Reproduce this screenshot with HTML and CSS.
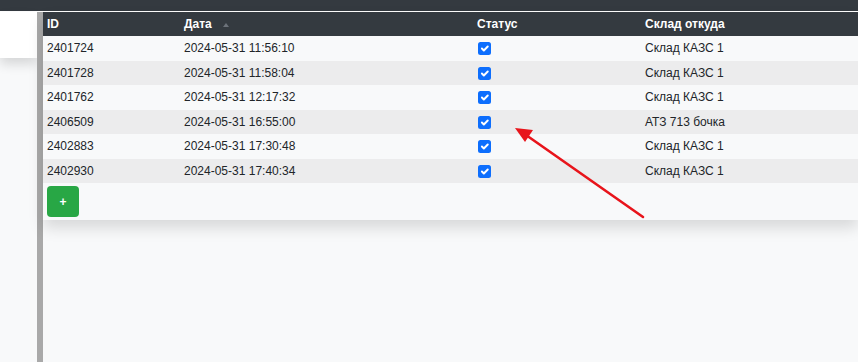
FILE: index.html
```html
<!DOCTYPE html>
<html lang="ru">
<head>
<meta charset="utf-8">
<link rel="stylesheet" href="styles.css">
</head>
<body>
<div class="topbar"></div>
<div class="main">
  <div class="left"><div class="leftcard"></div></div>
  <div class="divider"></div>
  <div class="content">
    <div class="card">
      <table class="tbl">
        <colgroup><col class="c1"><col class="c2"><col class="c3"><col></colgroup>
        <thead>
          <tr><th>ID</th><th>Дата <span class="sort"></span></th><th>Статус</th><th>Склад откуда</th></tr>
        </thead>
        <tbody>
          <tr><td>2401724</td><td>2024-05-31 11:56:10</td><td><span class="chk"></span></td><td>Склад КАЗС 1</td></tr>
          <tr><td>2401728</td><td>2024-05-31 11:58:04</td><td><span class="chk"></span></td><td>Склад КАЗС 1</td></tr>
          <tr><td>2401762</td><td>2024-05-31 12:17:32</td><td><span class="chk"></span></td><td>Склад КАЗС 1</td></tr>
          <tr><td>2406509</td><td>2024-05-31 16:55:00</td><td><span class="chk"></span></td><td>АТЗ 713 бочка</td></tr>
          <tr><td>2402883</td><td>2024-05-31 17:30:48</td><td><span class="chk"></span></td><td>Склад КАЗС 1</td></tr>
          <tr><td>2402930</td><td>2024-05-31 17:40:34</td><td><span class="chk"></span></td><td>Склад КАЗС 1</td></tr>
        </tbody>
      </table>
      <div class="actions"><button class="add">+</button></div>
    </div>
  </div>
</div>
<svg class="arrow" width="858" height="362" viewBox="0 0 858 362">
  <line x1="643" y1="217" x2="526" y2="135" stroke="#e8141b" stroke-width="2.6" stroke-linecap="round"/>
  <polygon points="515,128 533,130 525,142" fill="#e8141b"/>
</svg>
</body>
</html>
```
FILE: styles.css
```css
html, body { margin: 0; padding: 0; }
body {
  background: #f8f9fa;
  font-family: "Liberation Sans", Arial, sans-serif;
  font-size: 12px;
  color: #212529;
  width: 858px;
  height: 362px;
  overflow: hidden;
  position: relative;
}
.topbar {
  height: 11px;
  background: #343a40;
  border-bottom: 1px solid #ffffff;
}
.main {
  display: flex;
  height: 350px;
}
.left { width: 37px; }
.leftcard {
  height: 46px;
  background: #ffffff;
  box-shadow: 0 6px 12px rgba(0,0,0,0.14);
}
.divider { width: 6px; background: #a9a9a9; }
.content { flex: 1; }
.card {
  background: #f8f9fa;
  box-shadow: 0 8px 14px rgba(0,0,0,0.13);
}
.tbl {
  width: 100%;
  border-collapse: collapse;
  table-layout: fixed;
}
.c1 { width: 137px; }
.c2 { width: 293px; }
.c3 { width: 168px; }
.tbl th {
  background: #343a40;
  color: #ffffff;
  font-weight: bold;
  text-align: left;
  height: 24px;
  padding: 0 4px;
  box-sizing: border-box;
}
.tbl td {
  height: 24.5px;
  padding: 0 4px;
  box-sizing: border-box;
  vertical-align: middle;
}
.tbl tbody tr:nth-child(even) td { background: #ececed; }
.sort {
  display: inline-block;
  width: 0; height: 0;
  border-left: 3.5px solid transparent;
  border-right: 3.5px solid transparent;
  border-bottom: 4px solid #6c727a;
  margin-left: 8px;
  vertical-align: 1px;
}
.chk {
  display: inline-block;
  width: 13px; height: 13px;
  border-radius: 2.5px;
  background: #0d6efd url("data:image/svg+xml,%3csvg xmlns='http://www.w3.org/2000/svg' viewBox='0 0 20 20'%3e%3cpath fill='none' stroke='%23fff' stroke-linecap='round' stroke-linejoin='round' stroke-width='3' d='M6 10l3 3l6-6'/%3e%3c/svg%3e") center/100% no-repeat;
  margin-left: 1px;
  vertical-align: middle;
}
.actions { padding: 3px 4px 3px; height: 31px; }
.add {
  width: 32px; height: 31px;
  border: 0;
  border-radius: 4px;
  background: #28a745;
  color: #ffffff;
  font-family: "Liberation Sans", Arial, sans-serif;
  font-weight: bold;
  font-size: 12px;
  padding: 0;
  display: block;
}
.arrow { position: absolute; left: 0; top: 0; pointer-events: none; }
```
